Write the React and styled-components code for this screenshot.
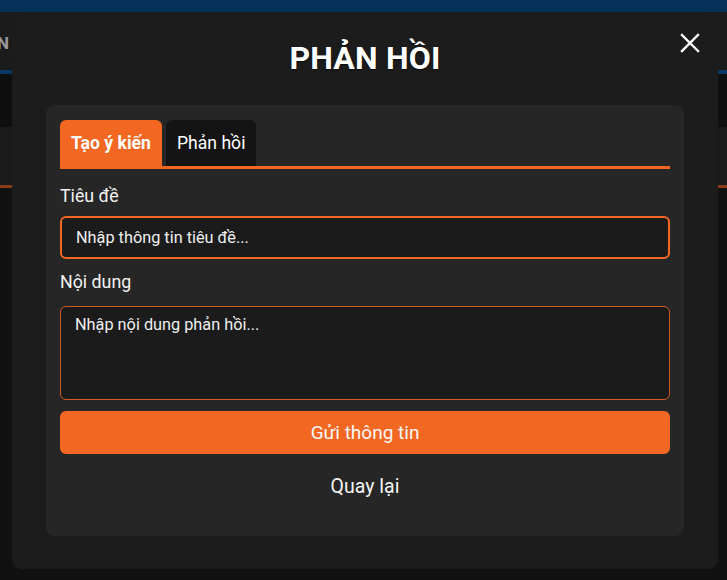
import React, { useState } from 'react';
import styled, { createGlobalStyle } from 'styled-components';

const GlobalStyle = createGlobalStyle`
  html, body {
    margin: 0;
    padding: 0;
    background: #111111;
    font-family: Roboto, "Noto Sans", "Liberation Sans", sans-serif;
  }
  * { box-sizing: border-box; }
`;

const orange = '#f26722';

const Page = styled.div`
  width: 727px;
  height: 580px;
  overflow: hidden;
  position: relative;
  background: #111111;
`;

const TopBand = styled.div`
  height: 12px;
  background: #05305a;
`;

const NavRow = styled.div`
  height: 62px;
  background: #1b1b1b;
  display: flex;
  align-items: center;
  padding-top: 4px;
  color: #9a9a9a;
  font-weight: 700;
  font-size: 17px;
  border-bottom: 4px solid #0a3866;
`;

const NavText = styled.span`
  margin-left: -3px;
`;

const SubBar = styled.div`
  height: 53px;
  background: #0f0f0f;
`;

const Strip = styled.div`
  height: 61px;
  background: #1a1a1a;
  border-bottom: 3px solid #8a3c18;
`;

const Overlay = styled.div`
  position: absolute;
  left: 12px;
  top: 12px;
  width: 706px;
  height: 557px;
  background: #1c1c1c;
  border-radius: 10px;
  padding: 0 34px;
  display: flex;
  flex-direction: column;
`;

const Header = styled.div`
  height: 93px;
  display: flex;
  align-items: center;
  justify-content: center;
  position: relative;
`;

const Title = styled.h1`
  margin: 0 0 2px 0;
  color: #ffffff;
  font-size: 32px;
  font-weight: 700;
  letter-spacing: 0.2px;
  text-shadow: 0 1px 2px rgba(0, 0, 0, 0.6);
`;

const Close = styled.button`
  position: absolute;
  right: -18px;
  top: 19px;
  width: 24px;
  height: 24px;
  padding: 0;
  border: none;
  background: transparent;
  cursor: pointer;
  display: flex;
  align-items: center;
  justify-content: center;
`;

const Card = styled.div`
  background: #262626;
  border-radius: 9px;
  padding: 15px 14px 0 14px;
  height: 431px;
  display: flex;
  flex-direction: column;
`;

const Tabs = styled.div`
  display: flex;
  gap: 4px;
  border-bottom: 3px solid ${orange};
`;

const Tab = styled.button`
  height: 46px;
  padding: 0 11px;
  border: none;
  border-radius: 6px 6px 0 0;
  background: ${(p) => (p.$active ? orange : '#141414')};
  color: #ffffff;
  font-family: inherit;
  font-size: 17.6px;
  font-weight: ${(p) => (p.$active ? 700 : 400)};
  cursor: pointer;
`;

const Label = styled.label`
  display: block;
  color: #f2f2f2;
  font-size: 17.8px;
  line-height: 20px;
  margin-top: ${(p) => p.$top}px;
  margin-bottom: ${(p) => p.$bottom}px;
`;

const Input = styled.input`
  width: 100%;
  height: 43px;
  background: #1b1b1b;
  border: 2px solid ${orange};
  border-radius: 6px;
  padding: 0 14px;
  color: #ffffff;
  font-family: inherit;
  font-size: 16.3px;
  outline: none;
  &::placeholder { color: #f0f0f0; opacity: 1; }
`;

const TextArea = styled.textarea`
  width: 100%;
  height: 94px;
  background: #1b1b1b;
  border: 1px solid #d2591f;
  border-radius: 6px;
  padding: 8px 14px;
  color: #ffffff;
  font-family: inherit;
  font-size: 16.3px;
  resize: none;
  outline: none;
  display: block;
  &::placeholder { color: #f0f0f0; opacity: 1; }
`;

const Submit = styled.button`
  margin-top: 11px;
  width: 100%;
  height: 43px;
  border: none;
  border-radius: 6px;
  background: ${orange};
  color: #f7f7f7;
  font-family: inherit;
  font-size: 19px;
  cursor: pointer;
`;

const Back = styled.button`
  margin-top: 20px;
  align-self: center;
  border: none;
  background: transparent;
  color: #f4f4f4;
  font-family: inherit;
  font-size: 19.5px;
  font-weight: 400;
  cursor: pointer;
`;

const CloseIcon = () => (
  <svg width="20" height="20" viewBox="0 0 20 20">
    <path d="M2 2 L18 18 M18 2 L2 18" stroke="#ffffff" strokeWidth="2.4" strokeLinecap="square" />
  </svg>
);

export default function App() {
  const [tab, setTab] = useState(0);
  return (
    <Page>
      <GlobalStyle />
      <TopBand />
      <NavRow><NavText>N</NavText></NavRow>
      <SubBar />
      <Strip />
      <Overlay>
        <Header>
          <Title>PHẢN HỒI</Title>
          <Close aria-label="Đóng"><CloseIcon /></Close>
        </Header>
        <Card>
          <Tabs>
            <Tab $active={tab === 0} onClick={() => setTab(0)}>Tạo ý kiến</Tab>
            <Tab $active={tab === 1} onClick={() => setTab(1)}>Phản hồi</Tab>
          </Tabs>
          <Label $top={17} $bottom={10}>Tiêu đề</Label>
          <Input placeholder="Nhập thông tin tiêu đề..." />
          <Label $top={13} $bottom={14}>Nội dung</Label>
          <TextArea placeholder="Nhập nội dung phản hồi..." />
          <Submit>Gửi thông tin</Submit>
          <Back>Quay lại</Back>
        </Card>
      </Overlay>
    </Page>
  );
}
